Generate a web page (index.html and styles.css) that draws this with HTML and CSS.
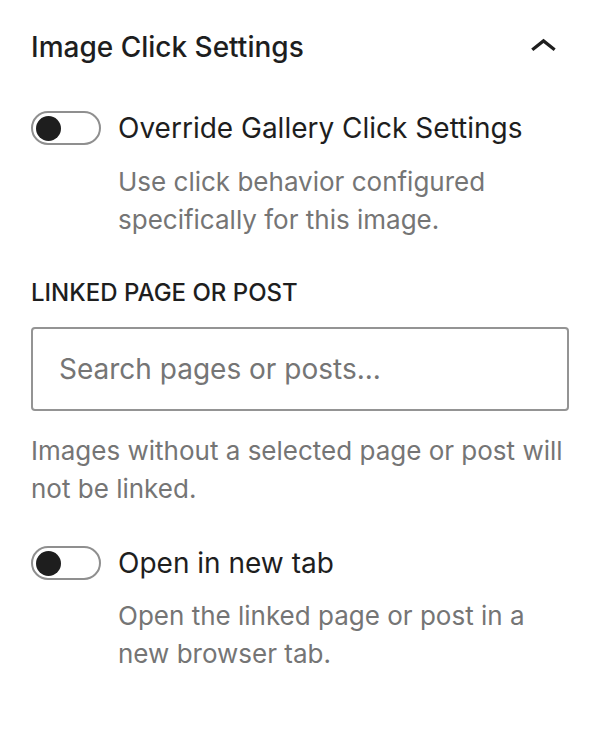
FILE: index.html
```html
<!DOCTYPE html>
<html lang="en">
<head>
    <meta charset="UTF-8">
    <meta name="viewport" content="width=device-width, initial-scale=1.0">
    <title>Image Click Settings</title>
    <link rel="stylesheet" href="styles.css">
</head>
<body>
    <div class="panel">
        <div class="panel-header">
            <h2 class="panel-title">Image Click Settings</h2>
            <button class="panel-toggle" aria-label="Collapse">
                <svg viewBox="0 0 24 24" width="53" height="53">
                    <path d="M6.5 12.4L12 8l5.5 4.4-.9 1.2L12 10l-4.6 3.6-1-1.2z" fill="#1e1e1e"></path>
                </svg>
            </button>
        </div>

        <div class="toggle-field">
            <div class="toggle-row">
                <span class="switch"><span class="switch-thumb"></span></span>
                <label class="toggle-label">Override Gallery Click Settings</label>
            </div>
            <p class="help indented">Use click behavior configured specifically for this image.</p>
        </div>

        <div class="link-field">
            <label class="field-label" for="linkSearch">Linked page or post</label>
            <input type="text" id="linkSearch" class="search-input" placeholder="Search pages or posts...">
            <p class="help">Images without a selected page or post will not be linked.</p>
        </div>

        <div class="toggle-field">
            <div class="toggle-row">
                <span class="switch"><span class="switch-thumb"></span></span>
                <label class="toggle-label">Open in new tab</label>
            </div>
            <p class="help indented">Open the linked page or post in a new browser tab.</p>
        </div>
    </div>
</body>
</html>
```

FILE: styles.css
```css
body {
    margin: 0;
    padding: 0;
    background: #fff;
    font-family: Inter, "Noto Sans", Arial, sans-serif;
    color: #1e1e1e;
}

.panel {
    padding: 22px 31px 40px 31px;
}

.panel-header {
    display: flex;
    justify-content: space-between;
    align-items: center;
    height: 50px;
}

.panel-title {
    margin: 0;
    font-size: 28px;
    font-weight: 500;
}

.panel-toggle {
    background: none;
    border: none;
    padding: 0;
    margin-right: -1px;
    display: flex;
    cursor: pointer;
}

.toggle-field {
    margin-top: 39px;
}

.toggle-row {
    display: flex;
    align-items: center;
    gap: 17px;
    height: 34px;
}

.switch {
    box-sizing: border-box;
    width: 70px;
    height: 34px;
    border: 2px solid #8f8f8f;
    border-radius: 17px;
    display: flex;
    align-items: center;
    padding-left: 3px;
}

.switch-thumb {
    width: 25px;
    height: 25px;
    border-radius: 50%;
    background: #1e1e1e;
}

.toggle-label {
    font-size: 28px;
    line-height: 34px;
}

.help {
    margin: 18px 0 0 0;
    font-size: 26px;
    line-height: 38px;
    color: #757575;
}

.indented {
    margin-left: 87px;
}

.link-field {
    margin-top: 39px;
}

.field-label {
    display: block;
    text-transform: uppercase;
    font-size: 24px;
    line-height: 30px;
    font-weight: 500;
    margin-bottom: 19px;
}

.search-input {
    box-sizing: border-box;
    display: block;
    width: 100%;
    height: 84px;
    border: 2px solid #949494;
    border-radius: 4px;
    padding: 0 26px;
    font-family: inherit;
    font-size: 28px;
    color: #1e1e1e;
}

.search-input::placeholder {
    color: #757575;
}

.link-field .help {
    margin-top: 21px;
}

.link-field + .toggle-field {
    margin-top: 38px;
}

.link-field + .toggle-field .help {
    margin-top: 17px;
}
```
